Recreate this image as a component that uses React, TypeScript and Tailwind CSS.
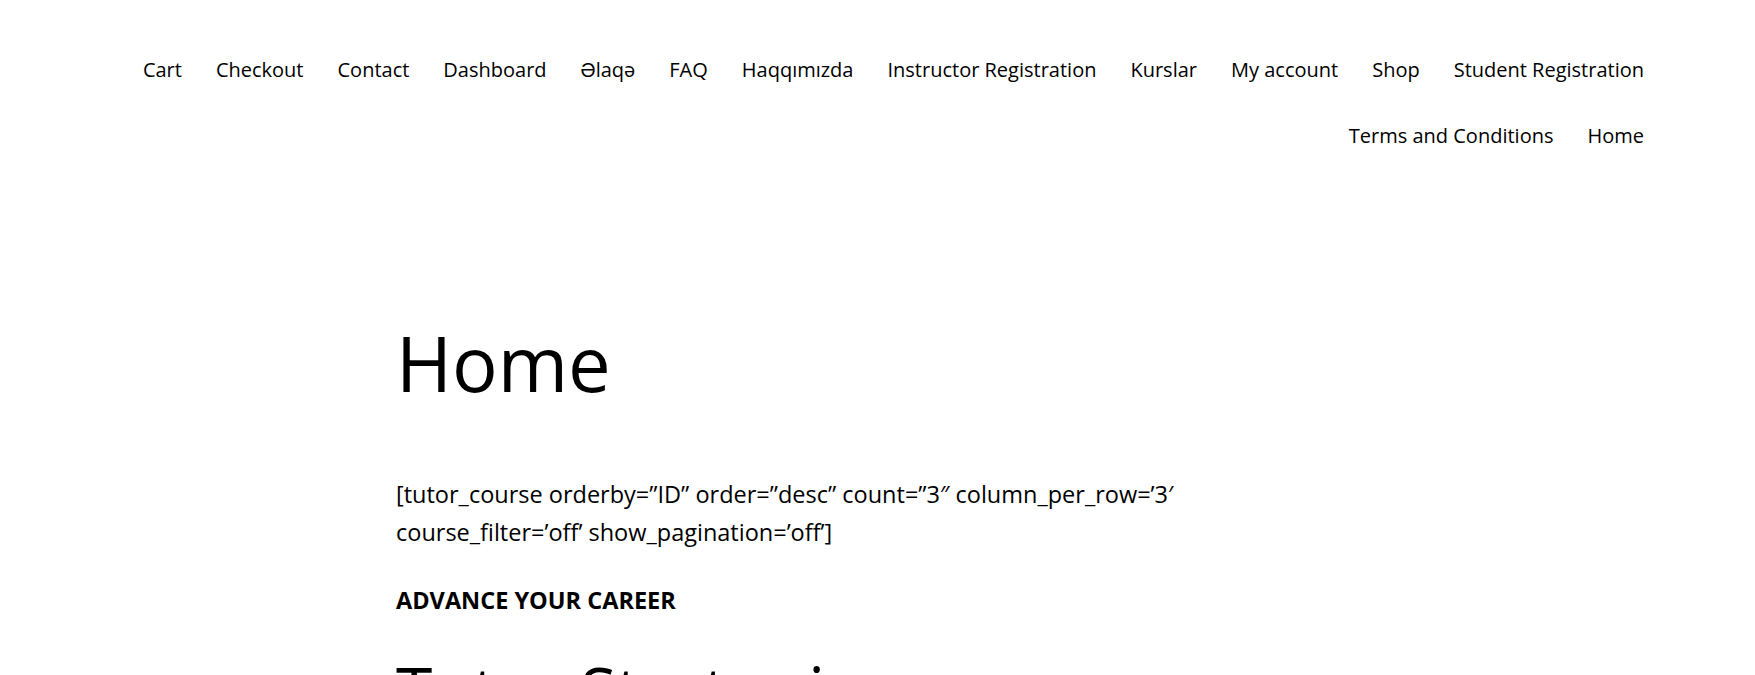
const menuRows = [
	[
		"Cart",
		"Checkout",
		"Contact",
		"Dashboard",
		"Əlaqə",
		"FAQ",
		"Haqqımızda",
		"Instructor Registration",
		"Kurslar",
		"My account",
		"Shop",
		"Student Registration",
	],
	["Terms and Conditions", "Home"],
];

const App = () => {
	return (
		<div className="min-h-screen bg-white text-black font-['Open_Sans',sans-serif] overflow-hidden">
			<header className="pt-[37px] pr-[111px]">
				<nav>
					{menuRows.map((row, i) => (
						<ul
							key={i}
							className="flex justify-end items-center gap-x-[34px] h-[66px] text-[20px]"
						>
							{row.map((item) => (
								<li key={item}>
									<a href="#" className="whitespace-nowrap">
										{item}
									</a>
								</li>
							))}
						</ul>
					))}
				</nav>
			</header>

			<main className="mx-auto w-[963px]">
				<h1 className="mt-[152px] text-[76px] leading-[1.1] font-normal">
					Home
				</h1>

				<p className="mt-[70px] w-[820px] text-[23.5px] leading-[38px]">
					[tutor_course orderby=”ID” order=”desc” count=”3″ column_per_row=’3′
					course_filter=’off’ show_pagination=’off’]
				</p>

				<h4 className="mt-[33px] text-[23.5px] leading-[33px] font-bold">
					ADVANCE YOUR CAREER
				</h4>

				<h2 className="mt-[36px] text-[66px] leading-[1.1] font-normal">
					Tutor Starter is a course
				</h2>
			</main>
		</div>
	);
};

export default App;
